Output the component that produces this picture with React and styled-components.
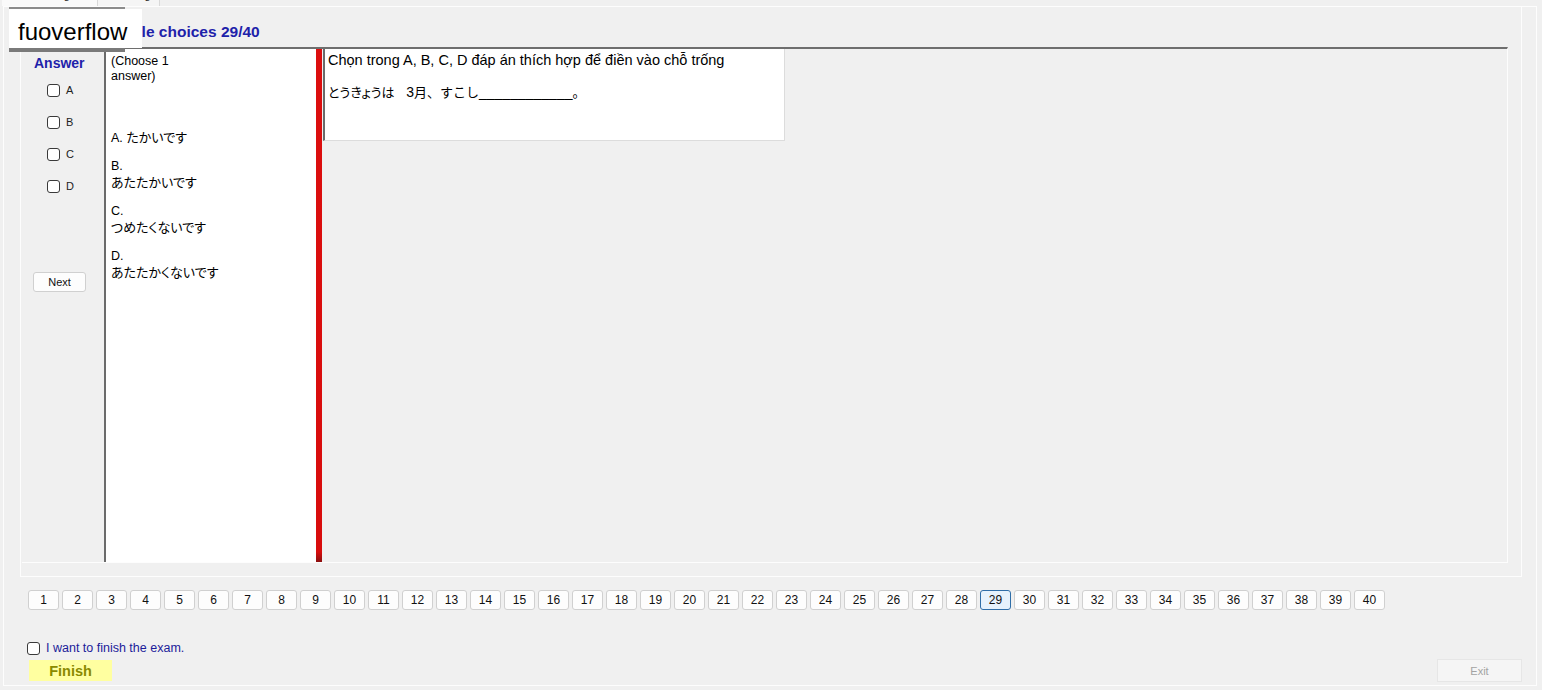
import React from "react";
import styled, { createGlobalStyle, css } from "styled-components";

const Global = createGlobalStyle`
  html, body { margin: 0; padding: 0; background: #f0f0f0; }
  body { font-family: "Liberation Sans", Arial, sans-serif; color: #000; }
  * { box-sizing: border-box; }
`;

const Window = styled.div`
  position: relative;
  width: 1542px;
  height: 690px;
  background: #f0f0f0;
  overflow: hidden;
`;

const TabStrip = styled.div`
  display: flex;
  align-items: flex-end;
  height: 6px;
  overflow: hidden;
  padding-left: 2px;
`;

const Tab = styled.div`
  flex: none;
  width: ${(p) => p.$w}px;
  height: 20px;
  padding-top: 2px;
  background: ${(p) => (p.$active ? "#fafafa" : "#f5f5f5")};
  border-right: 1px solid #d9d9d9;
  font-size: 11px;
  line-height: 14px;
  text-align: center;
  color: #222;
`;

const TabPage = styled.div`
  margin-left: 3px;
  width: 1534px;
  height: 680px;
  border: 1px solid #fdfdfd;
  padding-left: 16px;
  display: flex;
  flex-direction: column;
`;

const ExamPanel = styled.div`
  width: 1502px;
  height: 570px;
  border: 1px solid #fdfdfd;
  border-top: none;
  padding-left: 1px;
  display: flex;
  flex-direction: column;
`;

const Title = styled.div`
  height: 40px;
  padding: 16px 0 0 74px;
  font-size: 15.5px;
  line-height: 18px;
  font-weight: bold;
  color: #1e22aa;
`;

const GroupBox = styled.div`
  display: flex;
  width: 1486px;
  height: 516px;
  border-top: 2px solid #6e6e6e;
  border-right: 1px solid #fdfdfd;
  border-bottom: 1px solid #fdfdfd;
`;

const AnswerCol = styled.div`
  flex: none;
  width: 82px;
  display: flex;
  flex-direction: column;
  padding-top: 6px;
`;

const AnswerTitle = styled.div`
  padding-left: 12px;
  font-size: 14px;
  line-height: 16px;
  font-weight: bold;
  color: #1e22aa;
`;

const ChoiceList = styled.div`
  margin-top: 3px;
  display: flex;
  flex-direction: column;
`;

const Choice = styled.label`
  display: flex;
  align-items: center;
  height: 32px;
  padding-left: 25px;
  gap: 6px;
  font-size: 11px;
  color: #222;
`;

const Box = styled.input.attrs({ type: "checkbox" })`
  appearance: none;
  margin: 0;
  flex: none;
  width: 13px;
  height: 13px;
  border: 1px solid #3a3a3a;
  border-radius: 3px;
  background: #fff;
`;

const buttonBase = css`
  display: flex;
  align-items: center;
  justify-content: center;
  background: #fdfdfd;
  border: 1px solid #d0d0d0;
  border-radius: 3px;
  color: #111;
  font-family: "Liberation Sans", Arial, sans-serif;
`;

const NextButton = styled.div`
  ${buttonBase};
  margin: 70px 0 0 11px;
  width: 53px;
  height: 20px;
  font-size: 11px;
`;

const OptionsPanel = styled.div`
  flex: none;
  width: 212px;
  background: #fff;
  border-left: 2px solid #6b6b6b;
  padding: 5px 0 0 5px;
  font-size: 12.5px;
  line-height: 15px;
`;

const Line = styled.div`
  height: 15px;
  white-space: nowrap;
  margin-top: ${(p) => p.$gap || 0}px;
`;

const Jp = styled.span`
  font-family: "Noto Sans CJK JP", sans-serif;
  font-size: 13px;
  font-feature-settings: ${(p) => (p.$full ? "normal" : '"palt"')};
`;

const RedBar = styled.div`
  flex: none;
  width: 6px;
  background: linear-gradient(to bottom, #dc0e0e 0%, #d80d0d 98%, #8a1010 100%);
`;

const QuestionArea = styled.div`
  flex: 1;
  padding: 0 0 0 1px;
`;

const QuestionBox = styled.div`
  width: 462px;
  height: 92px;
  background: #fff;
  border-left: 2px solid #6b6b6b;
  border-right: 1px solid #dcdcdc;
  border-bottom: 1px solid #dcdcdc;
  padding: 2px 0 0 3px;
`;

const QuestionText = styled.div`
  font-size: ${(p) => p.$size || 14}px;
  line-height: 18px;
  white-space: nowrap;
  margin-top: ${(p) => p.$gap || 0}px;
`;

const NumberBar = styled.div`
  display: flex;
  gap: 3px;
  margin: 13px 0 0 8px;
`;

const NumButton = styled.div`
  ${buttonBase};
  width: 31px;
  height: 20px;
  font-size: 12px;
  ${(p) =>
    p.$active &&
    css`
      border-color: #2f6ea8;
      background: #e6f2fc;
    `}
`;

const FinishRow = styled.label`
  display: flex;
  align-items: center;
  gap: 6px;
  height: 16px;
  margin: 30px 0 0 7px;
  font-size: 12.5px;
  color: #1c1c9a;
`;

const ActionRow = styled.div`
  display: flex;
  align-items: center;
  justify-content: space-between;
  height: 23px;
  margin-top: 3px;
  padding: 0 14px 0 9px;
`;

const FinishButton = styled.div`
  width: 83px;
  height: 21px;
  display: flex;
  align-items: center;
  justify-content: center;
  background: #ffffa0;
  color: #8a8a00;
  font-size: 14.5px;
  font-weight: bold;
`;

const ExitButton = styled.div`
  width: 85px;
  height: 23px;
  display: flex;
  align-items: center;
  justify-content: center;
  background: #f5f5f5;
  border: 1px solid #e6e6e6;
  color: #a3a3a3;
  font-size: 11px;
`;

const Watermark = styled.div`
  position: absolute;
  left: 9px;
  top: 7px;
  width: 116px;
  height: 45px;
  border-top: 2px solid #8c8c8c;
  border-bottom: 4px solid #7a7a7a;
`;

const WatermarkLabel = styled.div`
  position: absolute;
  left: 0;
  top: 0;
  width: 133px;
  height: 39px;
  background: #fff;
  padding: 7px 0 0 9px;
  font-size: 24px;
  line-height: 32px;
  color: #000;
`;

const options = [
  { label: "A.", text: "たかいです", inline: true, gap: 45 },
  { label: "B.", text: "あたたかいです", gap: 15 },
  { label: "C.", text: "つめたくないです", gap: 15 },
  { label: "D.", text: "あたたかくないです", gap: 15 },
];

export default function App() {
  const nums = Array.from({ length: 40 }, (_, i) => i + 1);
  return (
    <Window>
      <Global />
      <TabStrip>
        <Tab $w={96} $active>Reading</Tab>
        <Tab $w={62}>Listening</Tab>
      </TabStrip>
      <TabPage>
        <ExamPanel>
          <Title>Multiple choices 29/40</Title>
          <GroupBox>
            <AnswerCol>
              <AnswerTitle>Answer</AnswerTitle>
              <ChoiceList>
                {["A", "B", "C", "D"].map((c) => (
                  <Choice key={c}>
                    <Box />
                    <span>{c}</span>
                  </Choice>
                ))}
              </ChoiceList>
              <NextButton>Next</NextButton>
            </AnswerCol>
            <OptionsPanel>
              <Line>(Choose 1</Line>
              <Line>answer)</Line>
              {options.map((o) =>
                o.inline ? (
                  <Line key={o.label} $gap={o.gap}>
                    {o.label} <Jp>{o.text}</Jp>
                  </Line>
                ) : (
                  <React.Fragment key={o.label}>
                    <Line $gap={o.gap}>{o.label}</Line>
                    <Line>
                      <Jp>{o.text}</Jp>
                    </Line>
                  </React.Fragment>
                )
              )}
            </OptionsPanel>
            <RedBar />
            <QuestionArea>
              <QuestionBox>
                <QuestionText $size={14.5}>
                  Chọn trong A, B, C, D đáp án thích hợp để điền vào chỗ trống
                </QuestionText>
                <QuestionText $gap={14}>
                  <Jp>とうきょうは</Jp>
                  {"\u00a0\u00a0 3"}
                  <Jp $full>月、すこし</Jp>
                  {"____________"}
                  <Jp $full>。</Jp>
                </QuestionText>
              </QuestionBox>
            </QuestionArea>
          </GroupBox>
        </ExamPanel>
        <NumberBar>
          {nums.map((n) => (
            <NumButton key={n} $active={n === 29}>
              {n}
            </NumButton>
          ))}
        </NumberBar>
        <FinishRow>
          <Box />
          <span>I want to finish the exam.</span>
        </FinishRow>
        <ActionRow>
          <FinishButton>Finish</FinishButton>
          <ExitButton>Exit</ExitButton>
        </ActionRow>
      </TabPage>
      <Watermark>
        <WatermarkLabel>fuoverflow</WatermarkLabel>
      </Watermark>
    </Window>
  );
}
